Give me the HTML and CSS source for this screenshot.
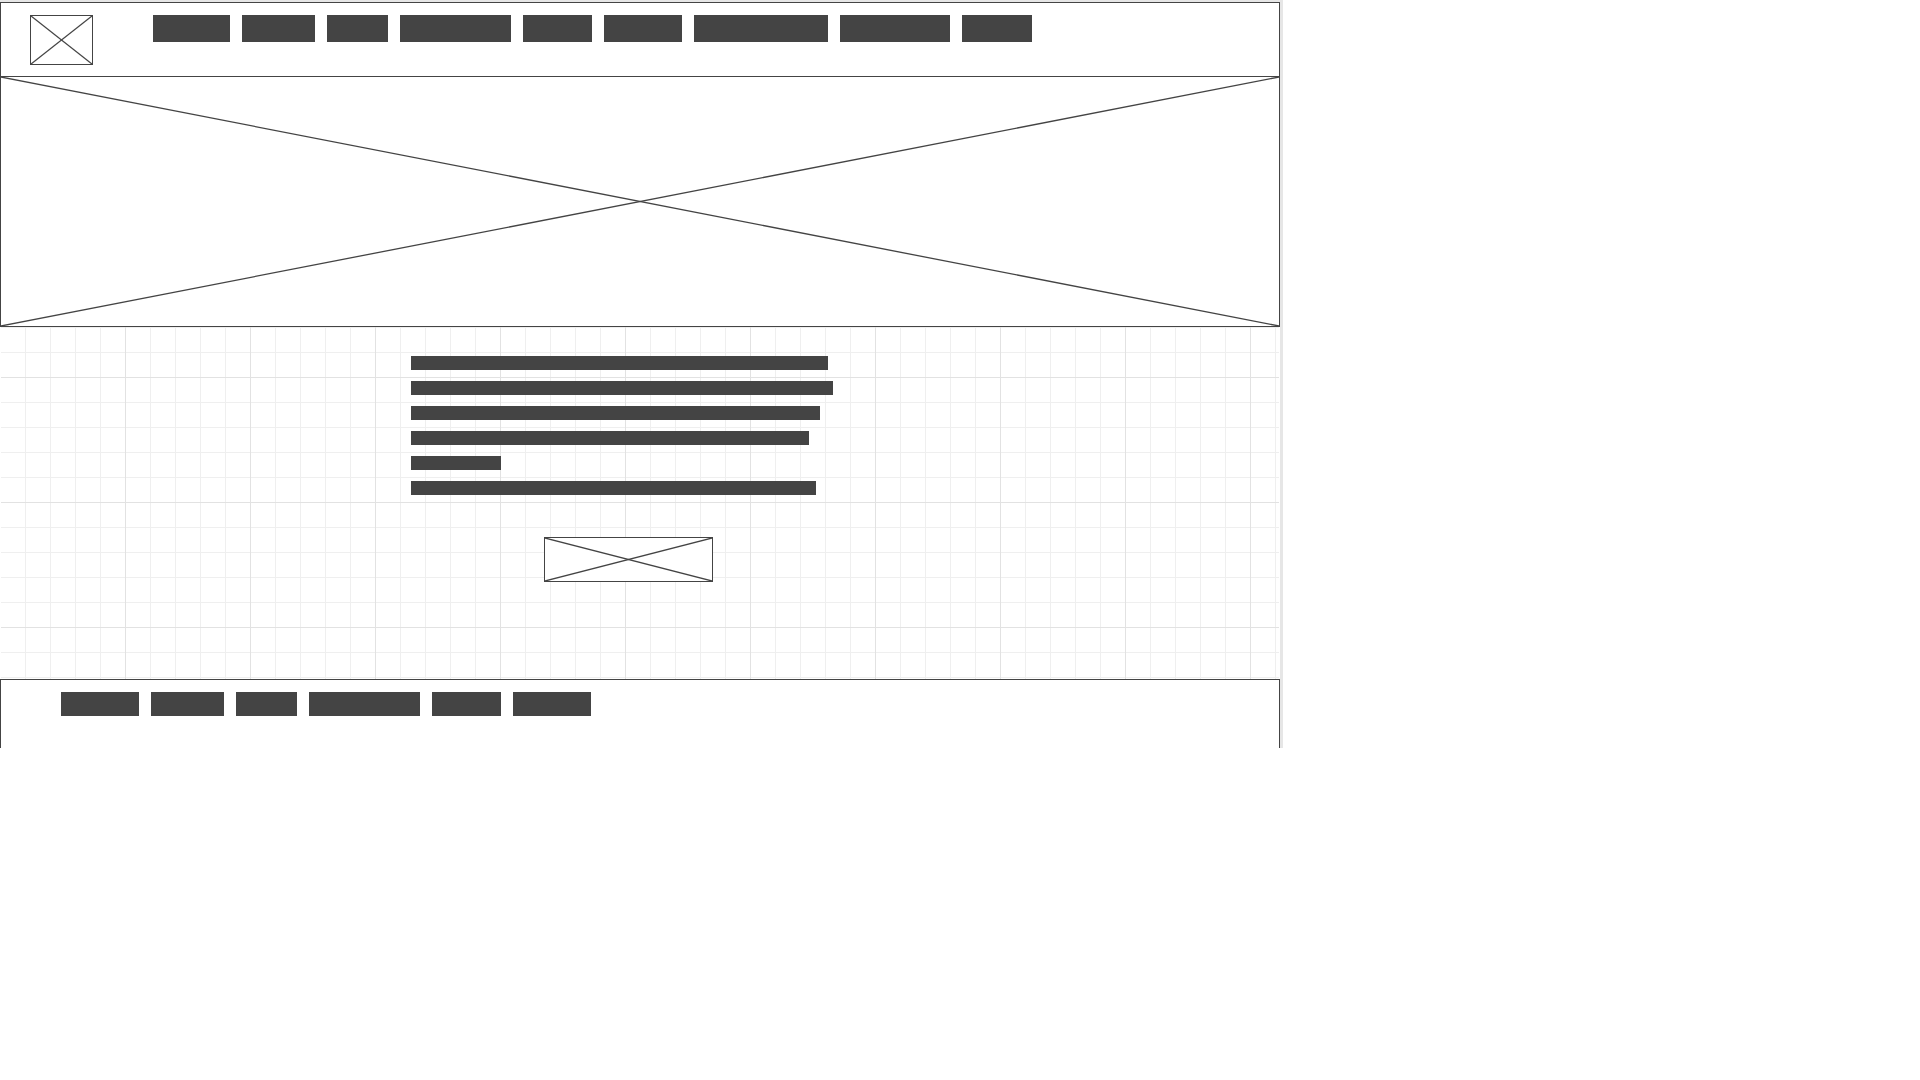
FILE: index.html
```html
<!DOCTYPE html>
<html lang="en">
<head>
  <meta charset="UTF-8" />
  <meta name="viewport" content="width=device-width, initial-scale=1.0"/>
  <title>Wireframe</title>
  <link rel="stylesheet" href="styles.css">
</head>
<body>
  <div class="frame">
    <div class="page">
      <header class="header">
        <div class="logo">
          <svg class="cross" viewBox="0 0 100 100" preserveAspectRatio="none"><line x1="0" y1="0" x2="100" y2="100"/><line x1="100" y1="0" x2="0" y2="100"/></svg>
        </div>
        <nav class="nav">
          <span class="block" style="width: 77px"></span>
          <span class="block" style="width: 73px"></span>
          <span class="block" style="width: 61px"></span>
          <span class="block" style="width: 111px"></span>
          <span class="block" style="width: 69px"></span>
          <span class="block" style="width: 78px"></span>
          <span class="block" style="width: 134px"></span>
          <span class="block" style="width: 110px"></span>
          <span class="block" style="width: 70px"></span>
        </nav>
      </header>

      <section class="hero">
        <svg class="cross" viewBox="0 0 100 100" preserveAspectRatio="none"><line x1="0" y1="0" x2="100" y2="100"/><line x1="100" y1="0" x2="0" y2="100"/></svg>
      </section>

      <section class="content">
        <div class="lines">
          <span class="line" style="width: 417px"></span>
          <span class="line" style="width: 422px"></span>
          <span class="line" style="width: 409px"></span>
          <span class="line" style="width: 398px"></span>
          <span class="line" style="width: 90px"></span>
          <span class="line" style="width: 405px"></span>
        </div>
        <div class="cta">
          <svg class="cross" viewBox="0 0 100 100" preserveAspectRatio="none"><line x1="0" y1="0" x2="100" y2="100"/><line x1="100" y1="0" x2="0" y2="100"/></svg>
        </div>
      </section>

      <footer class="footer">
        <span class="block small" style="width: 78px"></span>
        <span class="block small" style="width: 73px"></span>
        <span class="block small" style="width: 61px"></span>
        <span class="block small" style="width: 111px"></span>
        <span class="block small" style="width: 69px"></span>
        <span class="block small" style="width: 78px"></span>
      </footer>
    </div>
  </div>
</body>
</html>
```

FILE: styles.css
```css
body {
  margin: 0;
  background: #fff;
  font-family: "Liberation Sans", Arial, sans-serif;
}

.frame {
  width: 1283px;
  height: 748px;
  padding-top: 2px;
  box-sizing: border-box;
  background: #e6e6e6;
  overflow: hidden;
}

.page {
  width: 1280px;
  background: #fff;
}

.cross {
  display: block;
  width: 100%;
  height: 100%;
}

.cross line {
  stroke: #444;
  stroke-width: 1.3;
  vector-effect: non-scaling-stroke;
}

/* Kopfzeile */
.header {
  display: flex;
  align-items: flex-start;
  height: 74px;
  box-sizing: border-box;
  padding: 12px 0 0 29px;
  border: 1px solid #444;
  border-bottom: none;
}

.logo {
  width: 63px;
  height: 50px;
  box-sizing: border-box;
  border: 1px solid #444;
}

.nav {
  display: flex;
  gap: 12px;
  margin-left: 60px;
}

.block {
  display: block;
  height: 27px;
  background: #444;
}

.block.small {
  height: 24px;
}

/* Bildfläche */
.hero {
  height: 251px;
  box-sizing: border-box;
  border: 1px solid #444;
}

/* Raster mit Text */
.content {
  height: 352px;
  box-sizing: border-box;
  padding: 29px 0 0 410px;
  margin: 0 1px;
  background-color: #fff;
  background-image:
    linear-gradient(to right, #e2e2e2 1px, transparent 1px),
    linear-gradient(to bottom, #e2e2e2 1px, transparent 1px),
    linear-gradient(to right, #efefef 1px, transparent 1px),
    linear-gradient(to bottom, #efefef 1px, transparent 1px);
  background-size: 125px 125px, 125px 125px, 25px 25px, 25px 25px;
  background-position: 124px 0, 0 50px, 24px 0, 0 0;
}

.lines {
  display: flex;
  flex-direction: column;
  gap: 11px;
}

.line {
  display: block;
  height: 14px;
  background: #444;
}

.cta {
  width: 169px;
  height: 45px;
  margin: 42px 0 0 133px;
  box-sizing: border-box;
  border: 1px solid #444;
  background: #fff;
}

/* Fußzeile */
.footer {
  display: flex;
  gap: 12px;
  height: 90px;
  box-sizing: border-box;
  padding: 12px 0 0 60px;
  border: 1px solid #444;
  border-bottom: none;
}
```
